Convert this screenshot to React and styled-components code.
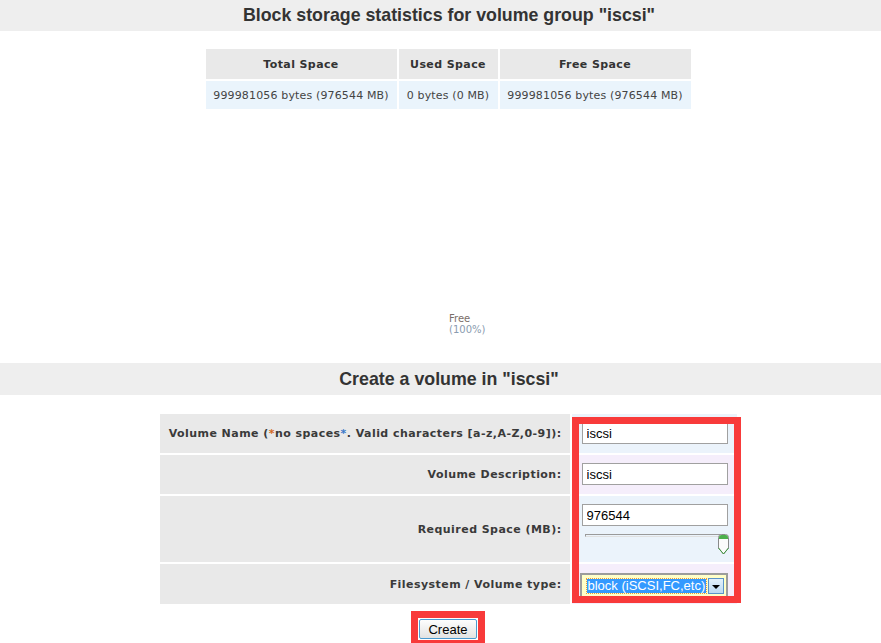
import React from "react";
import styled, { createGlobalStyle } from "styled-components";

const GlobalStyle = createGlobalStyle`
  html, body { margin: 0; padding: 0; background: #fff; overflow: hidden; }
  body { font-family: "DejaVu Sans", Verdana, sans-serif; color: #333; }
  * { box-sizing: border-box; }
`;

const Page = styled.div`
  width: 881px;
`;

const SectionBar = styled.div`
  height: ${(p) => p.$h}px;
  background: #eeeeee;
  display: flex;
  align-items: center;
  justify-content: center;
  padding-left: 17px;
`;

const SectionTitle = styled.h2`
  margin: 0;
  font-family: "Liberation Sans", Arial, sans-serif;
  font-weight: bold;
  font-size: 17.8px;
  color: #333;
`;

const Centered = styled.div`
  display: flex;
  justify-content: center;
  padding-left: 15px;
  margin-top: ${(p) => p.$mt || 0}px;
`;

const StatsTable = styled.table`
  border-collapse: separate;
  border-spacing: 2px;
  font-size: 11px;
`;

const HeadCell = styled.th`
  width: ${(p) => p.$w}px;
  height: 30px;
  background: #e9e9e9;
  font-weight: bold;
  letter-spacing: 0.4px;
  color: #333;
  padding: 0;
  text-align: center;
`;

const DataCell = styled.td`
  height: 28px;
  background: #eaf4fc;
  color: #444;
  letter-spacing: 0.15px;
  padding: 0;
  text-align: center;
`;

const ChartArea = styled.div`
  height: 252px;
`;

const Form = styled.div`
  display: flex;
  gap: 2px;
`;

const LabelColumn = styled.div`
  display: flex;
  flex-direction: column;
  gap: 2px;
  width: 410px;
`;

const ValueColumn = styled.div`
  position: relative;
  display: flex;
  flex-direction: column;
  gap: 2px;
  width: 165px;
`;

const LabelCell = styled.div`
  height: ${(p) => p.$h}px;
  background: #e9e9e9;
  display: flex;
  align-items: center;
  justify-content: flex-end;
  padding-right: 8px;
  font-size: 11px;
  font-weight: bold;
  letter-spacing: 0.45px;
  color: #3a3a3a;
`;

const Star = styled.span`
  color: ${(p) => p.$c};
`;

const ValueCell = styled.div`
  height: ${(p) => p.$h}px;
  background: ${(p) => (p.$alt ? "#f5eefb" : "#ebf3fb")};
  padding: ${(p) => p.$pt || 8}px 0 0 10px;
`;

const TextInput = styled.input`
  display: block;
  width: 146px;
  height: 22px;
  border: 1px solid #a0a0a0;
  background: #fff;
  padding: 0 4px;
  font-family: "Liberation Sans", Arial, sans-serif;
  font-size: 13px;
  color: #000;
  outline: none;
`;

const Slider = styled.div`
  position: relative;
  margin: 3px 0 0 3px;
  width: 146px;
  height: 22px;
`;

const SliderTrack = styled.div`
  margin-top: 8px;
  width: 137px;
  height: 3px;
  border-top: 1px solid #9a9a9a;
  border-bottom: 1px solid #e0e0e0;
  border-left: 1px solid #9a9a9a;
`;

const SliderThumb = styled.svg`
  position: absolute;
  left: 132px;
  top: 0;
`;

const Highlight = styled.div`
  position: absolute;
  top: 3px;
  left: 0;
  width: 169px;
  height: 186px;
  border: 7px solid #f83a3a;
  pointer-events: none;
`;

const SelectBox = styled.div`
  margin-left: -2px;
  width: 148px;
  height: 25px;
  border: 2px solid #9c9c9c;
  background: #ffffc8;
  display: flex;
  align-items: center;
  justify-content: space-between;
  padding: 0 2px 0 5px;
  font-family: "Liberation Sans", Arial, sans-serif;
  font-size: 13px;
`;

const SelectedText = styled.span`
  background: #3399ff;
  color: #fff;
  line-height: 13px;
  height: 14px;
  padding: 0 1px;
  outline: 1px dotted #e89a3c;
  white-space: nowrap;
`;

const DropButton = styled.span`
  width: 16px;
  height: 16px;
  border: 1px solid #5a93c8;
  background: linear-gradient(#e4f1fb, #bcd9f1);
  display: flex;
  align-items: center;
  justify-content: center;
`;

const Arrow = styled.span`
  width: 0;
  height: 0;
  border-left: 4px solid transparent;
  border-right: 4px solid transparent;
  border-top: 4px solid #000;
  margin-top: 2px;
`;

const ButtonFrame = styled.div`
  border: 7px solid #f83a3a;
  padding: 1px;
  display: inline-block;
`;

const Button = styled.button`
  display: block;
  width: 58px;
  height: 20px;
  padding: 0;
  border: 1px solid #4a9ad0;
  border-radius: 2px;
  background: linear-gradient(#fdfdfd, #e2e2e2);
  font-family: "Liberation Sans", Arial, sans-serif;
  font-size: 13px;
  color: #000;
`;

const rows = [
  { h: 39 },
  { h: 39 },
  { h: 66 },
  { h: 40 },
];

export default function App() {
  return (
    <Page>
      <GlobalStyle />
      <SectionBar $h={31}>
        <SectionTitle>Block storage statistics for volume group "iscsi"</SectionTitle>
      </SectionBar>

      <Centered $mt={16}>
        <StatsTable>
          <thead>
            <tr>
              <HeadCell $w={191}>Total Space</HeadCell>
              <HeadCell $w={99}>Used Space</HeadCell>
              <HeadCell $w={191}>Free Space</HeadCell>
            </tr>
          </thead>
          <tbody>
            <tr>
              <DataCell>999981056 bytes (976544 MB)</DataCell>
              <DataCell>0 bytes (0 MB)</DataCell>
              <DataCell>999981056 bytes (976544 MB)</DataCell>
            </tr>
          </tbody>
        </StatsTable>
      </Centered>

      <ChartArea>
        <svg width="881" height="252" viewBox="0 0 881 252">
          <text x="449" y="211" fontFamily="DejaVu Sans, Verdana, sans-serif" fontSize="10" fill="#7a6e6a">Free</text>
          <text x="449" y="222" fontFamily="DejaVu Sans, Verdana, sans-serif" fontSize="10" fill="#8a9bb0">(100%)</text>
        </svg>
      </ChartArea>

      <SectionBar $h={32}>
        <SectionTitle>Create a volume in "iscsi"</SectionTitle>
      </SectionBar>

      <Centered $mt={19}>
        <Form>
          <LabelColumn>
            <LabelCell $h={rows[0].h}>
              Volume Name (<Star $c="#d2691e">*</Star>no spaces<Star $c="#3a78c8">*</Star>. Valid characters [a-z,A-Z,0-9]):
            </LabelCell>
            <LabelCell $h={rows[1].h}>Volume Description:</LabelCell>
            <LabelCell $h={rows[2].h}>Required Space (MB):</LabelCell>
            <LabelCell $h={rows[3].h}>Filesystem / Volume type:</LabelCell>
          </LabelColumn>
          <ValueColumn>
            <ValueCell $h={rows[0].h}>
              <TextInput defaultValue="iscsi" />
            </ValueCell>
            <ValueCell $h={rows[1].h} $alt>
              <TextInput defaultValue="iscsi" />
            </ValueCell>
            <ValueCell $h={rows[2].h}>
              <TextInput defaultValue="976544" />
              <Slider>
                <SliderTrack />
                <SliderThumb width="13" height="21" viewBox="0 0 13 21">
                  <path d="M1.5 3.5 Q1.5 0.5 4.5 0.5 H8.5 Q11.5 0.5 11.5 3.5 V14 L6.5 20 L1.5 14 Z" fill="#fbfbfb" stroke="#8a8a8a" />
                  <path d="M2 5 V3.5 Q2 1 4.5 1 H8.5 Q11 1 11 3.5 V5 Z" fill="#4cb04c" />
                  <path d="M1.5 14 L6.5 20 L11.5 14" fill="none" stroke="#3f9a3f" />
                </SliderThumb>
              </Slider>
            </ValueCell>
            <ValueCell $h={rows[3].h} $alt $pt={9}>
              <SelectBox role="combobox">
                <SelectedText>block (iSCSI,FC,etc)</SelectedText>
                <DropButton>
                  <Arrow />
                </DropButton>
              </SelectBox>
            </ValueCell>
            <Highlight />
          </ValueColumn>
        </Form>
      </Centered>

      <Centered $mt={7}>
        <ButtonFrame>
          <Button>Create</Button>
        </ButtonFrame>
      </Centered>
    </Page>
  );
}
